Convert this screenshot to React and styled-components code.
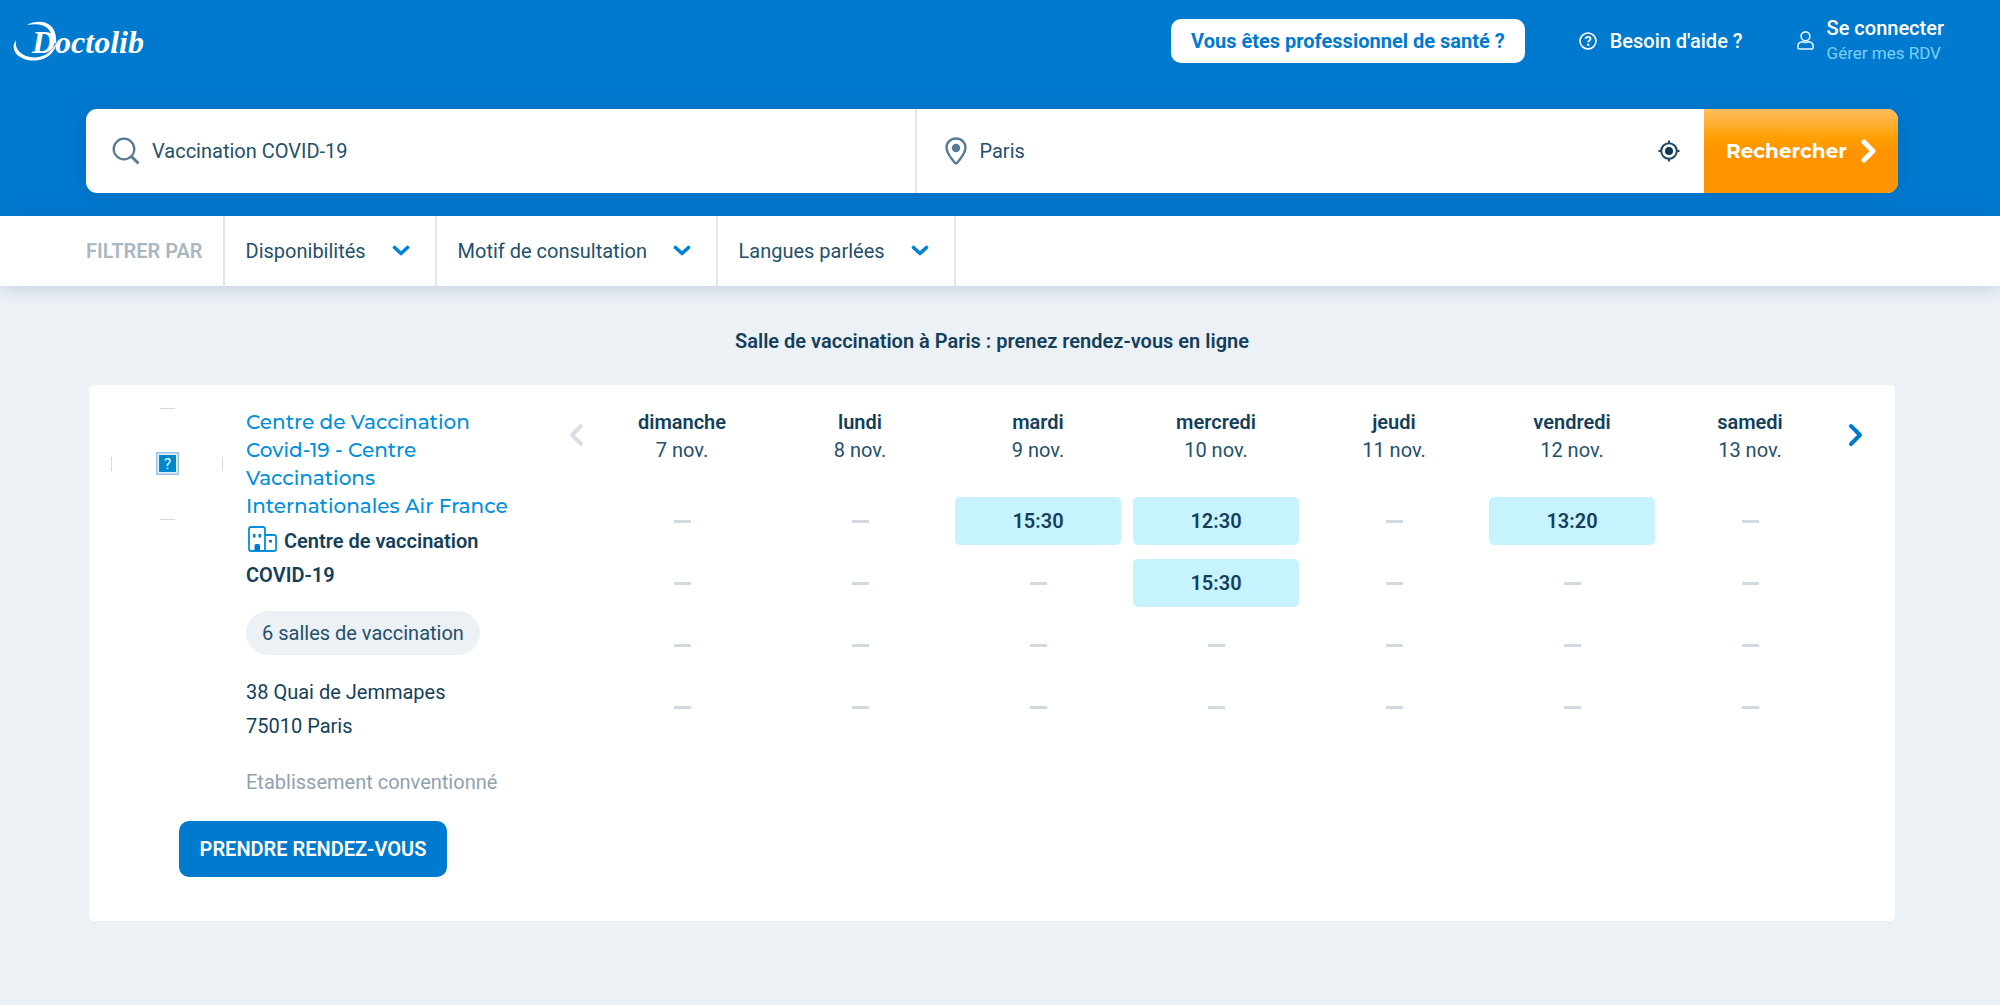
import styled, { createGlobalStyle } from "styled-components";

const GlobalStyle = createGlobalStyle`
	:root {
		--color-brand: #007acf;
		--color-link: #008fdb;
		--color-page: #ecf1f6;
		--color-text: #24506b;
		--color-text-dark: #143f5b;
		--color-text-muted: #8ea2b1;
		--color-icon: #587a93;
		--color-line: #e0e6eb;
		--color-slot: #c7f3ff;
		--font-title: Montserrat, Inter, sans-serif;
	}

	*, *::before, *::after {
		box-sizing: border-box;
	}

	body {
		margin: 0;
		background-color: var(--color-page);
		color: var(--color-text);
		font-family: Roboto, sans-serif;
		font-size: 20px;
		line-height: 28px;
	}

	button, input, select {
		font: inherit;
		color: inherit;
		border: none;
		background: none;
		padding: 0;
		margin: 0;
	}

	button, select {
		cursor: pointer;
	}

	a {
		text-decoration: none;
	}
`;

const StyledHeader = styled.header`
	background-color: var(--color-brand);
	padding-bottom: 23px;
`;

const TopBar = styled.div`
	display: flex;
	align-items: center;
	justify-content: space-between;
	height: 81px;
	padding: 0 56px 0 12px;
	margin-bottom: 28px;
`;

const LogoLink = styled.a`
	display: block;
	height: 44px;
`;

const TopNav = styled.nav`
	display: flex;
	align-items: center;
	gap: 54px;
	color: #fff;
`;

const ProButton = styled.a`
	padding: 8px 20px;
	border-radius: 10px;
	background-color: #fff;
	color: var(--color-brand);
	font-weight: 700;
`;

const NavLink = styled.a`
	display: flex;
	align-items: center;
	gap: 13px;
	color: #fff;
	font-weight: 500;
`;

const AccountText = styled.span`
	display: flex;
	flex-direction: column;
	line-height: 25px;
`;

const AccountHint = styled.span`
	color: #7fd0f7;
	font-size: 17px;
	font-weight: 400;
`;

const SearchForm = styled.form`
	display: flex;
	height: 84px;
	margin: 0 102px 0 86px;
	border-radius: 11px;
	background-color: #fff;
	box-shadow: 0 2px 20px rgba(0, 80, 160, 0.3);
	overflow: hidden;
`;

const SearchField = styled.label`
	display: flex;
	align-items: center;
	flex: ${(props) => props.$grow} 1 0;
	gap: 12px;
	padding: 0 24px 0 26px;

	& + & {
		padding-left: 28px;
		border-left: 2px solid var(--color-line);
	}
`;

const SearchInput = styled.input`
	flex: 1;
	min-width: 0;
	height: 100%;
	outline: none;
`;

const IconButton = styled.button`
	display: flex;
`;

const SearchButton = styled.button`
	display: flex;
	align-items: center;
	justify-content: space-between;
	width: 194px;
	padding: 0 22px;
	background: linear-gradient(#ffbd5f, #ff9f00 36%, #ff9400 50%);
	color: #fff;
	font-family: var(--font-title);
	font-weight: 700;
`;

const FilterBar = styled.div`
	display: flex;
	height: 70px;
	padding-left: 86px;
	background-color: #fff;
	box-shadow: 0 2px 18px rgba(40, 80, 140, 0.22);
`;

const FilterTitle = styled.span`
	padding-right: 20px;
	border-right: 2px solid var(--color-line);
	color: #a9b8c4;
	font-weight: 600;
	line-height: 70px;
`;

const Filter = styled.label`
	display: grid;
	align-items: center;
	border-right: 2px solid var(--color-line);

	& > select,
	& > svg {
		grid-area: 1 / 1;
	}

	& > svg {
		justify-self: end;
		margin-right: 25px;
		pointer-events: none;
	}
`;

const FilterSelect = styled.select`
	appearance: none;
	height: 100%;
	padding: 0 68px 0 21px;
`;

const Main = styled.main`
	padding: 41px 105px 84px 89px;
`;

const PageTitle = styled.h1`
	margin: 0 0 30px;
	color: var(--color-text-dark);
	font-size: 20px;
	font-weight: 600;
	text-align: center;
`;

const Card = styled.article`
	display: flex;
	align-items: flex-start;
	padding: 23px 32px 44px 22px;
	border-radius: 5px;
	background-color: #fff;
`;

const Details = styled.div`
	display: flex;
	flex-direction: column;
	align-items: center;
	gap: 22px;
	width: 404px;
	margin-right: 54px;
`;

const Profile = styled.div`
	display: flex;
	align-items: flex-start;
	gap: 22px;
	width: 100%;
`;

const Info = styled.div`
	flex: 1;
	line-height: 34px;
`;

const CenterName = styled.h2`
	margin: 0 0 4px;
	font-family: var(--font-title);
	font-size: 20px;
	font-weight: 500;
	line-height: 28px;

	a {
		color: var(--color-link);
	}
`;

const Speciality = styled.p`
	margin: 0 0 19px;
	color: var(--color-text-dark);
	font-weight: 600;

	svg {
		margin: 0 7px 0 2px;
		vertical-align: -4px;
	}
`;

const Pill = styled.span`
	display: inline-block;
	margin-bottom: 20px;
	padding: 5px 16px;
	border-radius: 22px;
	background-color: var(--color-page);
	vertical-align: top;
`;

const Address = styled.address`
	margin-bottom: 22px;
	color: var(--color-text-dark);
	font-style: normal;
`;

const Agreement = styled.p`
	margin: 0;
	color: var(--color-text-muted);
`;

const BookButton = styled.button`
	padding: 14px 21px;
	border-radius: 10px;
	background-color: var(--color-brand);
	color: #fff;
	font-weight: 600;
	text-transform: uppercase;
`;

const Calendar = styled.section`
	display: flex;
	align-items: flex-start;
	flex: 1;
	gap: 9px;
`;

const ArrowButton = styled.button`
	display: flex;
	margin-top: 15px;
	color: ${(props) => (props.disabled ? "#d7dee4" : "var(--color-brand)")};
`;

const Slots = styled.table`
	width: 100%;
	table-layout: fixed;
	border-collapse: collapse;

	th {
		padding: 0 0 33px;
		font-weight: 400;
	}

	td {
		height: 62px;
		padding: 0 6px 14px;
		text-align: center;
		vertical-align: middle;
	}
`;

const DayName = styled.span`
	display: block;
	color: var(--color-text-dark);
	font-weight: 600;
`;

const Slot = styled.button`
	display: block;
	width: 100%;
	height: 48px;
	border-radius: 5px;
	background-color: var(--color-slot);
	color: var(--color-text-dark);
	font-weight: 600;
`;

const NoSlot = styled.span`
	display: block;
	width: 17px;
	height: 3px;
	margin: 0 auto;
	background-color: #d2dae1;
`;

const days = [
	{ name: "dimanche", date: "7 nov.", slots: [] },
	{ name: "lundi", date: "8 nov.", slots: [] },
	{ name: "mardi", date: "9 nov.", slots: ["15:30"] },
	{ name: "mercredi", date: "10 nov.", slots: ["12:30", "15:30"] },
	{ name: "jeudi", date: "11 nov.", slots: [] },
	{ name: "vendredi", date: "12 nov.", slots: ["13:20"] },
	{ name: "samedi", date: "13 nov.", slots: [] },
];

const rows = [0, 1, 2, 3];

const filters = ["Disponibilités", "Motif de consultation", "Langues parlées"];

function Logo() {
	return (
		<svg width="134" height="44" viewBox="0 0 134 44" fill="#fff">
			<path d="M4 21C-1 28 2 36 12 40C26 45 43 38 44 24C38 37 25 41 14 37C5 33 3 27 4 21Z" />
			<path d="M15 6C28 -1 46 3 44 24L40 24C41 8 31 3 15 6Z" />
			<text
				x="20"
				y="34"
				fontFamily="'Liberation Serif', serif"
				fontSize="32"
				fontStyle="italic"
				fontWeight="700"
			>
				Doctolib
			</text>
		</svg>
	);
}

function Chevron({ direction = "right", stroke = 5 }) {
	const points = direction === "right" ? "3,3 12,12 3,21" : "12,3 3,12 12,21";
	return (
		<svg width="15" height="24" viewBox="0 0 15 24" fill="none">
			<polyline
				points={points}
				stroke="currentColor"
				strokeWidth={stroke}
				strokeLinecap="round"
				strokeLinejoin="round"
			/>
		</svg>
	);
}

function ChevronDown() {
	return (
		<svg width="18" height="12" viewBox="0 0 18 12" fill="none">
			<path
				d="M2.5 2.5L9 8.5L15.5 2.5"
				stroke="#0082d5"
				strokeWidth="3.6"
				strokeLinecap="round"
				strokeLinejoin="round"
			/>
		</svg>
	);
}

function SearchIcon() {
	return (
		<svg width="28" height="28" viewBox="0 0 28 28" fill="none" stroke="var(--color-icon)">
			<circle cx="12" cy="12" r="10.3" strokeWidth="2.3" />
			<path d="M19 19L26.5 26.5" strokeWidth="3" />
		</svg>
	);
}

function PinIcon() {
	return (
		<svg width="22" height="28" viewBox="0 0 22 28" fill="none">
			<path
				d="M11 1.5C5.5 1.5 1.5 5.6 1.5 10.8C1.5 15 4.5 19.5 9.6 25.5Q11 27.2 12.4 25.5C17.5 19.5 20.5 15 20.5 10.8C20.5 5.6 16.5 1.5 11 1.5Z"
				stroke="var(--color-icon)"
				strokeWidth="2.4"
			/>
			<circle cx="11" cy="11" r="4.2" fill="var(--color-icon)" />
		</svg>
	);
}

function LocateIcon() {
	return (
		<svg width="22" height="22" viewBox="0 0 22 22" fill="none" stroke="#1b4965">
			<circle cx="11" cy="11" r="7.8" strokeWidth="2" />
			<circle cx="11" cy="11" r="4" fill="#123a56" stroke="none" />
			<path d="M11 0.5V4M11 18V21.5M0.5 11H4M18 11H21.5" strokeWidth="2" />
		</svg>
	);
}

function HelpIcon() {
	return (
		<svg width="18" height="18" viewBox="0 0 18 18" fill="none" stroke="#fff">
			<circle cx="9" cy="9" r="8" strokeWidth="1.6" />
			<path
				d="M6.6 7C6.8 5.5 7.7 4.9 9 4.9C10.4 4.9 11.5 5.7 11.5 6.9C11.5 8.6 9.2 8.5 9.2 10.3"
				strokeWidth="1.8"
			/>
			<circle cx="9.2" cy="12.7" r="1.2" fill="#fff" stroke="none" />
		</svg>
	);
}

function UserIcon() {
	return (
		<svg width="17" height="19" viewBox="0 0 17 19" fill="none" stroke="#e3f3fc" strokeWidth="1.6">
			<circle cx="8.5" cy="5.3" r="4.4" />
			<path d="M5.5 10.8C2.5 11 0.9 12.8 0.9 15.2V16.6Q0.9 18 2.3 18H14.7Q16.1 18 16.1 16.6V15.2C16.1 12.8 14.5 11 11.5 10.8Q8.5 12.2 5.5 10.8Z" />
		</svg>
	);
}

function BuildingIcon() {
	return (
		<svg width="29" height="26" viewBox="0 0 29 26" fill="none" stroke="#0090dc" strokeWidth="1.8">
			<path d="M17 25H3Q1 25 1 23V3Q1 1 3 1H15Q17 1 17 3V25H26Q28 25 28 23V11Q28 9 26 9H17" />
			<path d="M6.5 25V19.5Q6.5 18 8 18H10.5Q12 18 12 19.5V25Z" fill="#007acf" stroke="none" />
			<path
				d="M5 8H7.5V11.5H5ZM10.5 8H13V11.5H10.5ZM21 14H24V16.5H21Z"
				fill="#007acf"
				stroke="none"
			/>
		</svg>
	);
}

function Avatar() {
	return (
		<svg width="113" height="113" viewBox="0 0 113 113" fill="none" role="img" aria-label="Photo du centre">
			<path d="M49 0.5H64M49 111.5H64M0.5 49V63M111.5 49V63" stroke="#d6d6d6" />
			<rect x="45" y="44" width="23" height="23" fill="#9cc3e4" />
			<rect x="46.5" y="45.5" width="20" height="20" fill="#e4effa" />
			<rect x="48" y="47" width="17" height="17" fill="#008acb" />
			<text x="56.5" y="61" fill="#fff" fontFamily="Roboto, sans-serif" fontSize="15" textAnchor="middle">
				?
			</text>
		</svg>
	);
}

function Header() {
	return (
		<StyledHeader>
			<TopBar>
				<LogoLink href="#" aria-label="Doctolib">
					<Logo />
				</LogoLink>
				<TopNav>
					<ProButton href="#">Vous êtes professionnel de santé ?</ProButton>
					<NavLink href="#">
						<HelpIcon />
						Besoin d'aide ?
					</NavLink>
					<NavLink href="#">
						<UserIcon />
						<AccountText>
							Se connecter
							<AccountHint>Gérer mes RDV</AccountHint>
						</AccountText>
					</NavLink>
				</TopNav>
			</TopBar>
			<SearchForm onSubmit={(e) => e.preventDefault()}>
				<SearchField $grow={832}>
					<SearchIcon />
					<SearchInput type="text" aria-label="Spécialité" defaultValue="Vaccination COVID-19" />
				</SearchField>
				<SearchField $grow={784}>
					<PinIcon />
					<SearchInput type="text" aria-label="Lieu" defaultValue="Paris" />
					<IconButton type="button" aria-label="Autour de moi">
						<LocateIcon />
					</IconButton>
				</SearchField>
				<SearchButton type="submit">
					Rechercher
					<Chevron />
				</SearchButton>
			</SearchForm>
		</StyledHeader>
	);
}

function Filters() {
	return (
		<FilterBar>
			<FilterTitle>FILTRER PAR</FilterTitle>
			{filters.map((name) => (
				<Filter key={name}>
					<FilterSelect aria-label={name}>
						<option>{name}</option>
					</FilterSelect>
					<ChevronDown />
				</Filter>
			))}
		</FilterBar>
	);
}

function Availabilities() {
	return (
		<Calendar>
			<ArrowButton disabled aria-label="Jours précédents">
				<Chevron direction="left" stroke={4} />
			</ArrowButton>
			<Slots>
				<thead>
					<tr>
						{days.map((day) => (
							<th key={day.date} scope="col">
								<DayName>{day.name}</DayName>
								{day.date}
							</th>
						))}
					</tr>
				</thead>
				<tbody>
					{rows.map((row) => (
						<tr key={row}>
							{days.map((day) => (
								<td key={day.date}>
									{day.slots[row] ? <Slot>{day.slots[row]}</Slot> : <NoSlot />}
								</td>
							))}
						</tr>
					))}
				</tbody>
			</Slots>
			<ArrowButton aria-label="Jours suivants">
				<Chevron stroke={4} />
			</ArrowButton>
		</Calendar>
	);
}

function App() {
	return (
		<>
			<GlobalStyle />
			<Header />
			<Filters />
			<Main>
				<PageTitle>Salle de vaccination à Paris : prenez rendez-vous en ligne</PageTitle>
				<Card>
					<Details>
						<Profile>
							<Avatar />
							<Info>
								<CenterName>
									<a href="#">
										Centre de Vaccination Covid-19 - Centre Vaccinations Internationales Air France
									</a>
								</CenterName>
								<Speciality>
									<BuildingIcon />
									Centre de vaccination COVID-19
								</Speciality>
								<Pill>6 salles de vaccination</Pill>
								<Address>
									38 Quai de Jemmapes
									<br />
									75010 Paris
								</Address>
								<Agreement>Etablissement conventionné</Agreement>
							</Info>
						</Profile>
						<BookButton>Prendre rendez-vous</BookButton>
					</Details>
					<Availabilities />
				</Card>
			</Main>
		</>
	);
}

export default App;
